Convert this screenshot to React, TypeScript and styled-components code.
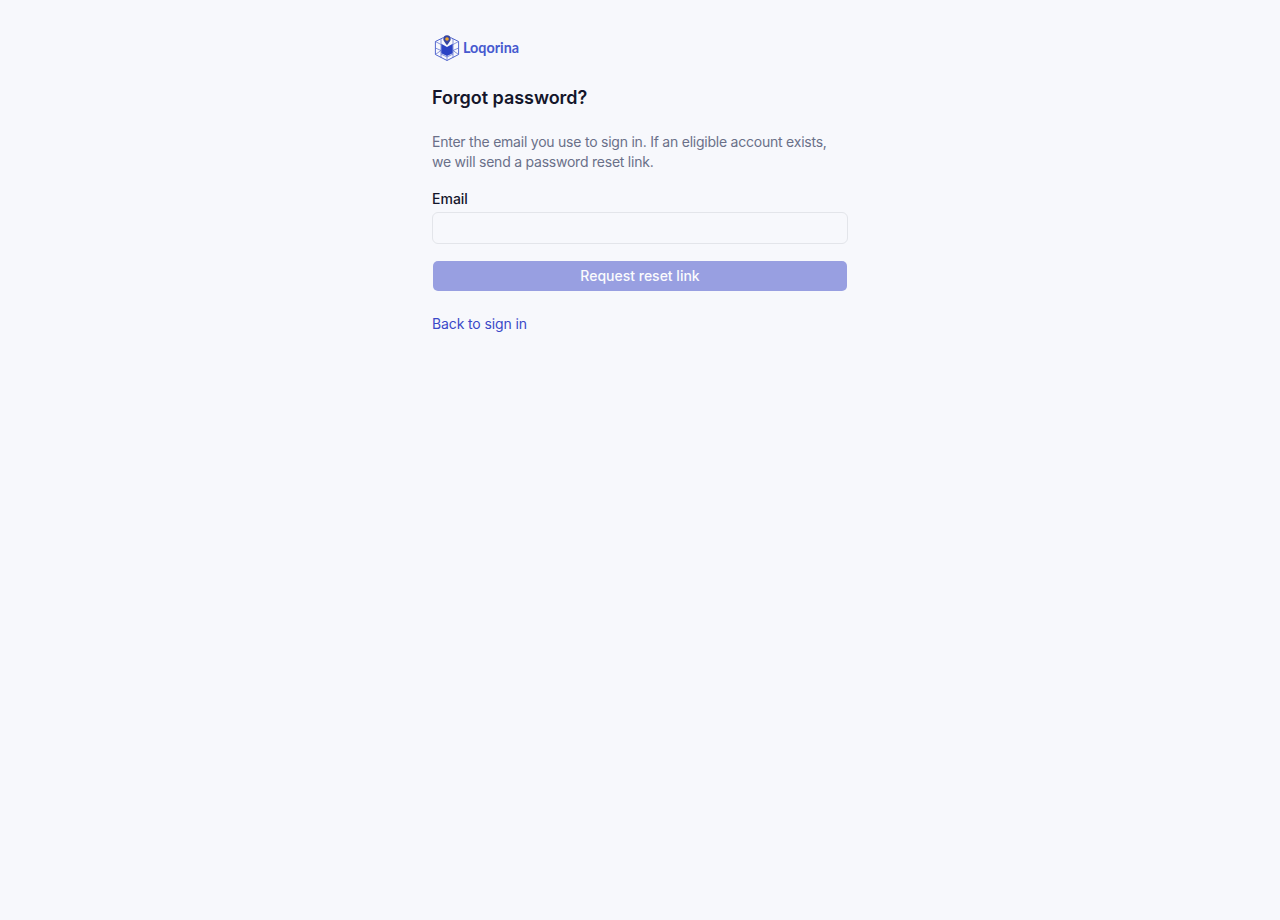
import { useState } from "react";
import styled, { createGlobalStyle } from "styled-components";

const GlobalStyle = createGlobalStyle`
  * {
    box-sizing: border-box;
  }
  body {
    margin: 0;
    background-color: #f7f8fc;
    color: #14162b;
    font-family: Inter, "Liberation Sans", sans-serif;
    font-size: 14px;
    line-height: 20px;
  }
`;

const Page = styled.main`
  width: 448px;
  margin: 0 auto;
  padding: 32px 16px;
  display: flex;
  flex-direction: column;
`;

const LogoImage = styled.svg`
  display: block;
  width: 90px;
  height: 32px;
`;

const LogoText = styled.text`
  font-family: Lato, sans-serif;
  font-size: 14.5px;
  font-weight: 700;
  fill: #4659cf;
`;

const Title = styled.h1`
  margin: 20px 0;
  font-size: 18px;
  line-height: 28px;
  font-weight: 600;
  letter-spacing: -0.04px;
`;

const Description = styled.p`
  margin: 0;
  color: #6a7089;
  letter-spacing: -0.23px;
`;

const Form = styled.form`
  margin-top: 20px;
  display: flex;
  flex-direction: column;
  gap: 16px;
`;

const Field = styled.div`
  display: flex;
  flex-direction: column;
  gap: 6px;
`;

const Label = styled.label`
  line-height: 14px;
  font-weight: 500;
`;

const Input = styled.input`
  height: 32px;
  padding: 4px 10px;
  border: 1px solid #e3e5ea;
  border-radius: 6px;
  background-color: transparent;
  font: inherit;
  outline: none;
`;

const SubmitButton = styled.button`
  height: 32px;
  padding: 0 10px;
  border: 1px solid transparent;
  border-radius: 6px;
  background-color: #3b49c8;
  background-clip: padding-box;
  color: #fff;
  font: inherit;
  font-weight: 500;
  &:disabled {
    opacity: 0.5;
  }
`;

const BackLink = styled.a`
  align-self: flex-start;
  margin-top: 22px;
  color: #3b49c8;
  letter-spacing: -0.12px;
  text-decoration: none;
`;

function Logo() {
  return (
    <LogoImage viewBox="0 0 90 32" role="img" aria-label="Loqorina">
      <g fill="none" stroke="#5468cf" strokeLinejoin="round">
        <path d="M11.5 5.5 3.4 9.5V22.5L15 28.5 26.6 22.5V9.5L18.5 5.5" />
        <path
          d="M3.4 9.5 9 12.5M26.6 9.5 21 12.5M9 7V25.5M21 7V25.5M3.4 16 9 18.5 3.4 22.5M26.6 16 21 18.5 26.6 22.5M9 22 15 25 21 22M15 24V28.5"
          strokeWidth="0.7"
        />
      </g>
      <path d="M9.3 11.8 15 15 20.7 11.8V21.2L15 24 9.3 21.2Z" fill="#2b43c4" />
      <path
        d="M15 13.2C13 10.4 11.3 8.9 11.3 6.9a3.7 3.7 0 0 1 7.4 0C18.7 8.9 17 10.4 15 13.2Z"
        fill="#3544a0"
      />
      <circle cx="15" cy="7" r="1.8" fill="#f0a52c" />
      <LogoText x="31" y="20.5" textLength="56" lengthAdjust="spacingAndGlyphs">
        Loqorina
      </LogoText>
    </LogoImage>
  );
}

function App() {
  const [email, setEmail] = useState("");
  return (
    <>
      <GlobalStyle />
      <Page>
        <Logo />
        <Title>Forgot password?</Title>
        <Description>
          Enter the email you use to sign in. If an eligible account exists,
          <br />
          we will send a password reset link.
        </Description>
        <Form onSubmit={(event) => event.preventDefault()}>
          <Field>
            <Label htmlFor="email">Email</Label>
            <Input
              id="email"
              type="email"
              value={email}
              onChange={(event) => setEmail(event.target.value)}
            />
          </Field>
          <SubmitButton type="submit" disabled={!email}>
            Request reset link
          </SubmitButton>
        </Form>
        <BackLink href="#">Back to sign in</BackLink>
      </Page>
    </>
  );
}

export default App;
